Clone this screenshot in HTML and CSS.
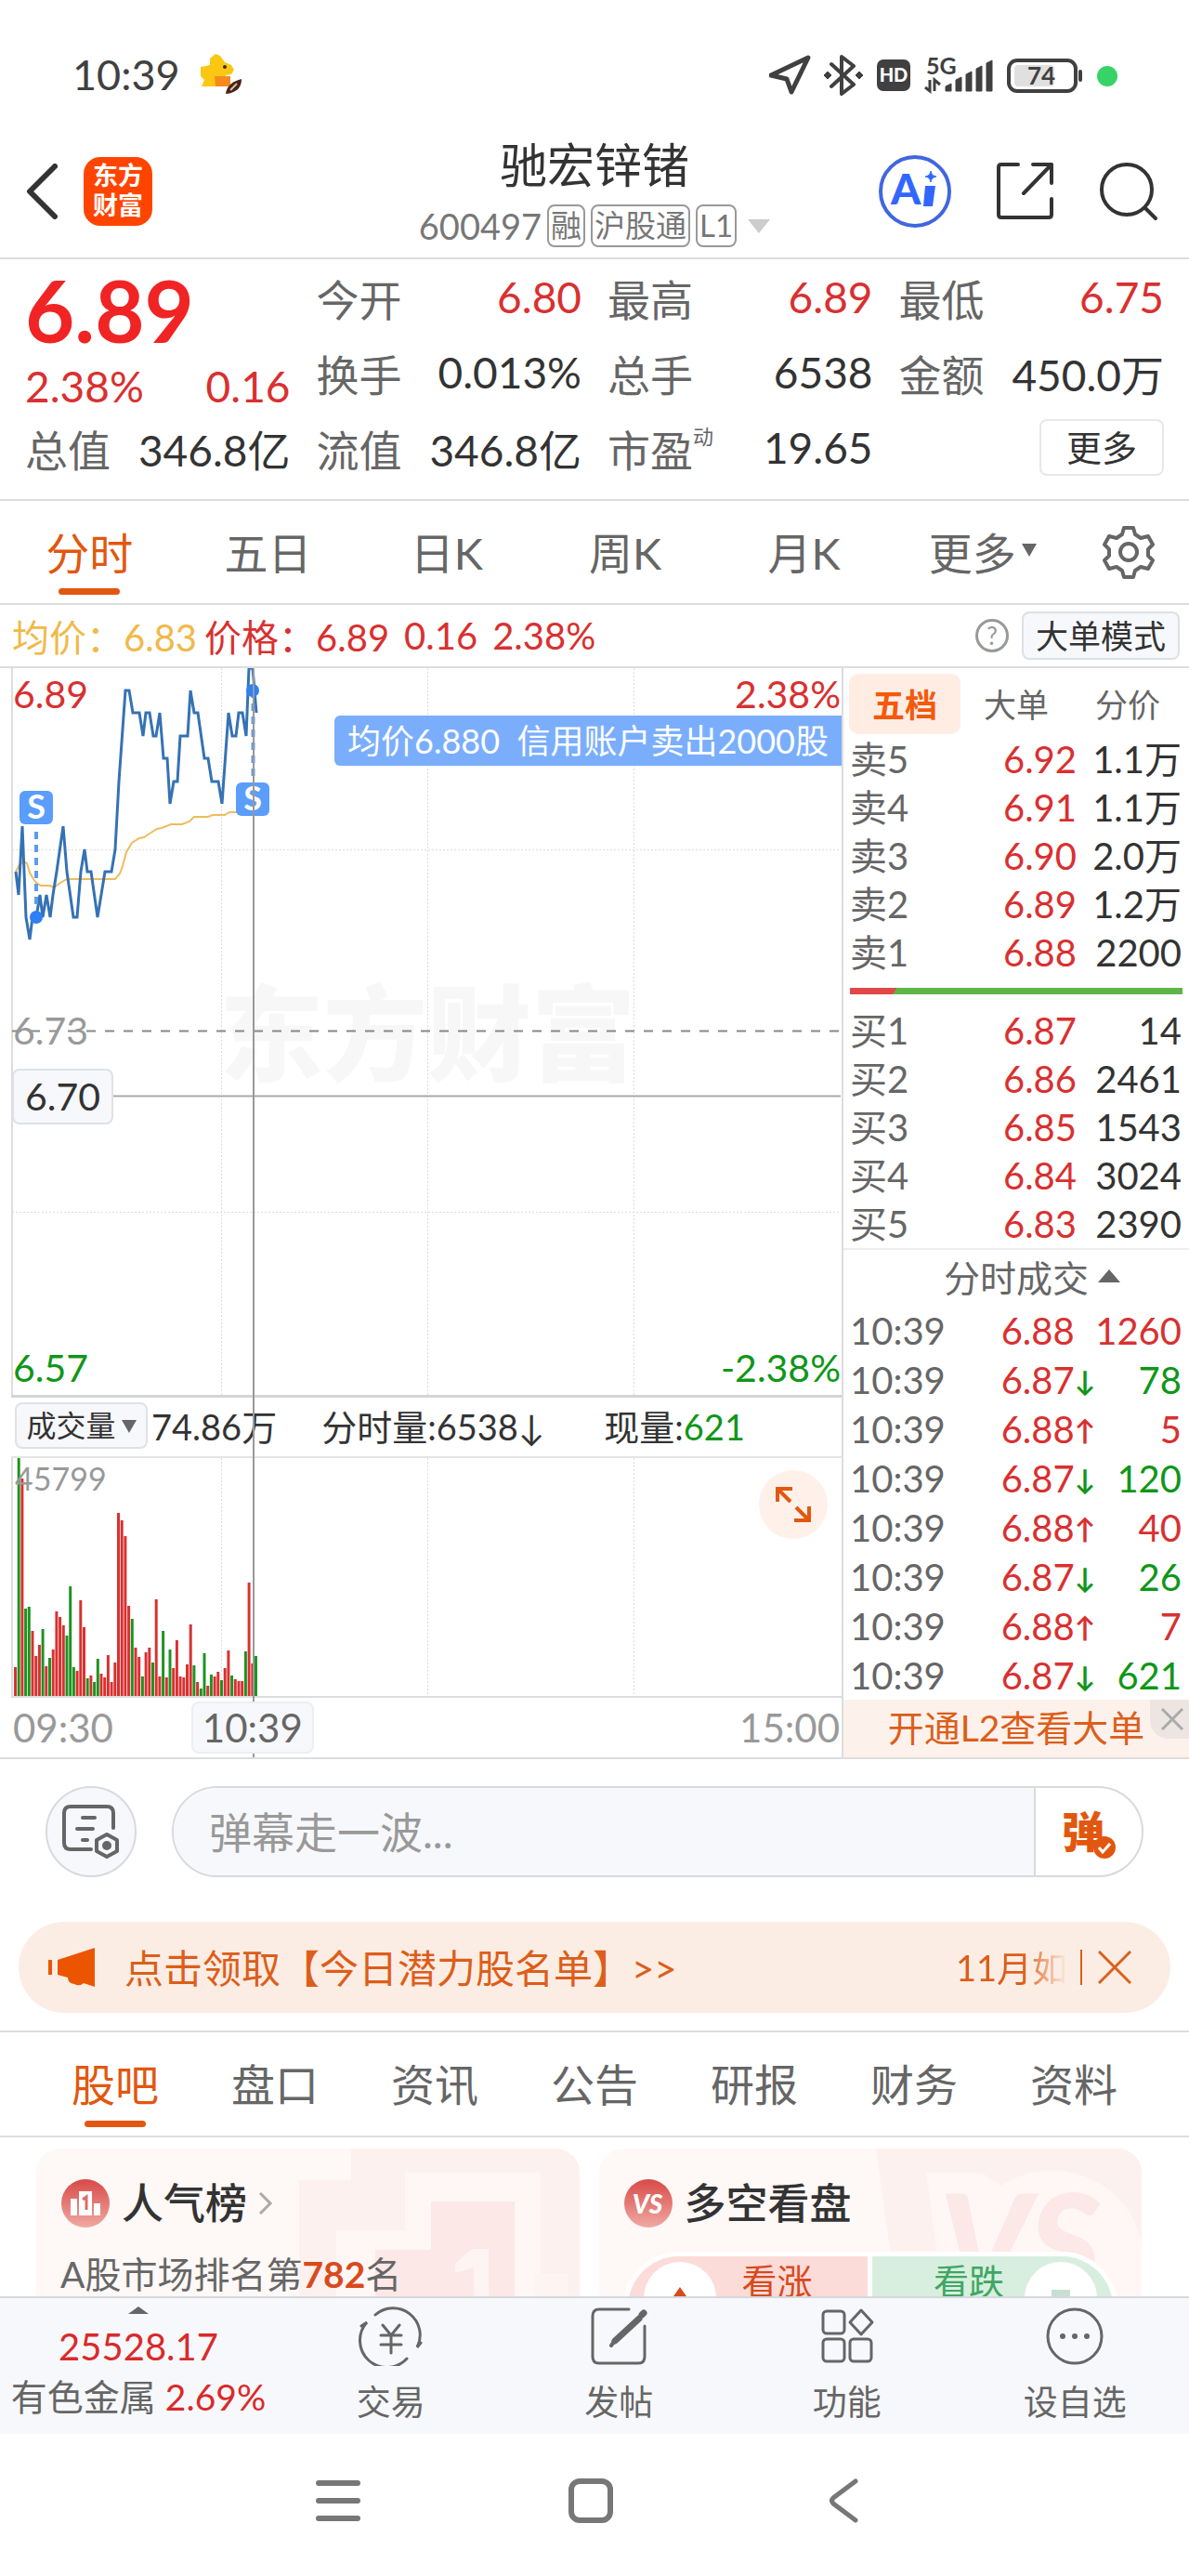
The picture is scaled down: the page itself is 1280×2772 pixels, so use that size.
FILE: index.html
```html
<!DOCTYPE html>
<html lang="zh-CN">
	<head>
		<meta charset="utf-8">
		<meta name="viewport" content="width=device-width, initial-scale=1">
		<title>驰宏锌锗 600497</title>
		<link rel="stylesheet" href="styles.css">
	</head>
	<body>
		<!-- 状态栏 -->
		<div class="status">
			<span class="clock">10:39</span>
			<svg class="dog" width="44" height="44" viewBox="0 0 44 44">
				<path d="M10 5l6-5 5 2 5 7 7 3 3 5-3 5-6 1-1 5 3 4-3 3H1l3-7-4-4V14l10-2z" fill="#fbc712"/>
				<circle cx="26" cy="14" r="2" fill="#333"/>
				<path d="M15 24h17v11H16z" fill="#f58a1f"/>
				<path d="M27 43c1-8 6-13 17-16 0 9-5 15-17 16z" fill="#4a2417"/>
				<path d="M32 39l7-7" stroke="#d8c0b4" stroke-width="2"/>
			</svg>
			<svg class="status-icons" width="376" height="46" viewBox="0 0 376 46">
				<path d="M2 24L42 5 24 42l-5-14z" fill="none" stroke="#404040" stroke-width="5" stroke-linejoin="round"/>
				<path d="M67 12l24 22-13 10V4l13 10-24 22" fill="none" stroke="#404040" stroke-width="4" stroke-linejoin="round" stroke-linecap="round"/>
				<path d="M63 20l4 4-4 4-4-4zM97 20l4 4-4 4-4-4z" fill="#404040" stroke="#404040"/>
				<rect x="116" y="7" width="36" height="34" rx="7" fill="#404040"/>
				<text x="134" y="31" class="hd">HD</text>
				<text x="169" y="23" class="net">5G</text>
				<path d="M173 29v12l-5-4M178 41V29l6 5" fill="none" stroke="#404040" stroke-width="3"/>
				<path d="M190 41v-5l6-3v8zM201 41V29l6-3v15zM212 41V23l6-3v21zM223 41V17l6-3v27zM234 41V11l6-3v33z" fill="#404040" stroke="#404040"/>
				<rect x="258" y="8" width="72" height="33" rx="9" fill="none" stroke="#404040" stroke-width="4"/>
				<rect x="264" y="13" width="43" height="23" rx="4" fill="#e0e0e0"/>
				<path d="M335 20v9" stroke="#404040" stroke-width="4" stroke-linecap="round"/>
				<text x="293" y="34" class="bat">74</text>
				<circle cx="364" cy="25" r="11" fill="#37d366"/>
			</svg>
		</div>

		<!-- 标题栏 -->
		<header class="header">
			<div class="head-left">
				<button class="plain" aria-label="返回">
					<svg width="34" height="60" viewBox="0 0 34 60"><path d="M31 3L4 30l27 27" fill="none" stroke="#333" stroke-width="6" stroke-linecap="round" stroke-linejoin="round"/></svg>
				</button>
				<a class="logo" href="#">东方<br>财富</a>
			</div>
			<div class="head-mid">
				<h1>驰宏锌锗</h1>
				<div class="code">600497<span class="tag">融</span><span class="tag">沪股通</span><span class="tag">L1</span><i class="tri tri-light"></i></div>
			</div>
			<div class="head-right">
				<button class="plain" aria-label="AI">
					<svg width="80" height="80" viewBox="0 0 80 80">
						<circle cx="40" cy="40" r="37" fill="none" stroke="#4066e0" stroke-width="4"/>
						<text x="14" y="54" class="ai">A</text>
						<path d="M51 34h11l-3 22H49z" fill="#3366ff"/>
						<path d="M57 18c1 4 2 5 6 6-4 1-5 2-6 6-1-4-2-5-6-6 4-1 5-2 6-6z" fill="#3366ff" stroke="#3366ff"/>
					</svg>
				</button>
				<button class="plain" aria-label="分享">
					<svg width="62" height="62" viewBox="0 0 62 62" fill="none" stroke="#333" stroke-width="4" stroke-linecap="round" stroke-linejoin="round"><path d="M23 2H5q-3 0-3 3v51q0 3 3 3h51q3 0 3-3V39M39 2h20v20M59 2L29 33"/></svg>
				</button>
				<button class="plain" aria-label="搜索">
					<svg width="64" height="64" viewBox="0 0 64 64" fill="none" stroke="#333" stroke-width="4" stroke-linecap="round"><circle cx="30" cy="30" r="27"/><path d="M50 50l11 11"/></svg>
				</button>
			</div>
		</header>

		<!-- 行情 -->
		<section class="quote">
			<div class="now">
				<strong>6.89</strong>
				<div class="pair red"><span>2.38%</span><span>0.16</span></div>
			</div>
			<div class="pair"><span class="name">今开</span><b class="red">6.80</b></div>
			<div class="pair"><span class="name">最高</span><b class="red">6.89</b></div>
			<div class="pair"><span class="name">最低</span><b class="red">6.75</b></div>
			<div class="pair"><span class="name">换手</span><b>0.013%</b></div>
			<div class="pair"><span class="name">总手</span><b>6538</b></div>
			<div class="pair"><span class="name">金额</span><b>450.0万</b></div>
			<div class="pair"><span class="name">总值</span><b>346.8亿</b></div>
			<div class="pair"><span class="name">流值</span><b>346.8亿</b></div>
			<div class="pair"><span class="name">市盈<sup>动</sup></span><b>19.65</b></div>
			<div class="pair more"><button class="more-btn">更多</button></div>
		</section>

		<!-- K线切换 -->
		<nav class="tabs">
			<a class="on" href="#">分时</a>
			<a href="#">五日</a>
			<a href="#">日K</a>
			<a href="#">周K</a>
			<a href="#">月K</a>
			<a href="#">更多<i class="tri tri-s"></i></a>
			<button class="plain gear" aria-label="设置">
				<svg width="58" height="58" viewBox="0 0 58 58" fill="none" stroke="#666" stroke-width="4" stroke-linejoin="round"><path d="M24 3h10l2 7 6 4 8-2 5 9-5 5v7l5 5-5 9-8-2-6 4-2 7H24l-2-7-6-4-8 2-5-9 5-5v-7l-5-5 5-9 8 2 6-4z"/><circle cx="29" cy="29" r="9"/></svg>
			</button>
		</nav>

		<div class="info">
			<span class="gold">均价：6.83</span>
			<span class="red">价格：6.89</span>
			<span class="red">0.16</span>
			<span class="red">2.38%</span>
			<button class="help" aria-label="帮助">?</button>
			<button class="mode">大单模式</button>
		</div>

		<section class="board">
			<div class="chart">
				<!-- 分时图 -->
				<svg class="price" viewBox="0 2 906 782">
					<text x="236" y="438" class="mark">东方财富</text>
					<g class="grid">
						<path d="M238.5 2v782M460.500 2v782M682.500 2v782M13 197.500h892M13 587.500h892"/>
					</g>
					<path d="M13 0v784" stroke="#ddd" stroke-width="2"/>
					<path d="M13 392.500h892" stroke="#888" stroke-width="2" stroke-dasharray="10 10"/>
					<path d="M13 462.500h892" stroke="#aaa" stroke-width="2"/>
					<path class="avg" d="M17 221l3-6 5-5 4 2 3 10 4 7 4 5 4 2h10l4 2 7-5 7-4h52l5-6 3-8 4-15 6-10 8-5 5-1 6-4 8-5 5-1 10-4h12l8-3 5-5h15l5-2h13l5-3h17l3-4h5l4-5"/>
					<path class="line" d="M17 221L20 246 24 172 28 270 32 294 35 270H39L43 246 46 270 50 246 54 270 57 246 61 221 68 172 72 221 79 270H83L87 221 91 197 94 221H98L105 270 113 221H120L124 197 128 124 135 26H139L143 50H150L154 75 157 50H161L165 75H168L172 50 176 99H180L183 148 187 124H191L194 75H202L205 26 209 50H213L220 99H224L228 124H235L239 148 246 50 250 75H254L257 50H261L265 75 268 2H272L276 50"/>
					<g class="sell">
						<path d="M39 178v78M272.500 26v98"/>
						<circle cx="39" cy="270" r="7"/>
						<circle cx="272" cy="26" r="7"/>
						<rect x="21" y="134" width="36" height="36" rx="6"/>
						<rect x="254" y="125" width="36" height="36" rx="6"/>
						<text x="39" y="164">S</text>
						<text x="272" y="155">S</text>
					</g>
					<text x="14" y="45" class="red">6.89</text>
					<text x="905" y="45" class="red end">2.38%</text>
					<text x="14" y="407" class="grey">6.73</text>
					<text x="14" y="770" class="green">6.57</text>
					<text x="905" y="770" class="green end">-2.38%</text>
				</svg>
				<div class="tip">均价6.880&nbsp; 信用账户卖出2000股</div>
				<div class="cur">6.70</div>
				<div class="vol-row">
					<button class="vol-btn">成交量<i class="tri tri-s"></i></button>
					<span>74.86万</span>
					<span class="v2">分时量:6538↓</span>
					<span class="v3">现量:<em class="green">621</em></span>
				</div>
				<!-- 成交量柱 x每格一分钟 -->
				<svg class="vol" viewBox="0 0 906 258">
					<g class="grid"><path d="M238.500 0v258M460.500 0v258M682.500 0v258"/></g>
					<g transform="translate(16.500 0) scale(3.7 1)" fill="none" stroke-width=".8">
						<path stroke="#d93030" d="M0 257V225M2 257V22M5 257V186M6 257V213M7 257V201M9 257V224M11 257V206M12 257V165M13 257V171M14 257V180M18 257V229M19 257V153M20 257V182M22 257V234M25 257V232M26 257V236M27 257V212M28 257V241M29 257V220M30 257V59M31 257V67M32 257V84M33 257V159M35 257V204M36 257V214M38 257V209M39 257V204M41 257V152M42 257V235M44 257V236M46 257V226M47 257V196M48 257V235M49 257V236M50 257V222M51 257V179M53 257V241M56 257V245M58 257V235M59 257V230M61 257V226M62 257V207M64 257V238M65 257V240M66 257V240M68 257V134M69 257V221"/>
						<path stroke="#1c9320" d="M1 257V0M3 257V162M4 257V160M8 257V184M10 257V215M15 257V191M16 257V138M17 257V225M21 257V237M23 257V241M24 257V216M34 257V173M37 257V235M40 257V220M43 257V186M45 257V206M52 257V223M54 257V248M55 257V210M57 257V233M60 257V239M63 257V234M67 257V208M70 257V213"/>
					</g>
					<path d="M13 0v257h893" fill="none" stroke="#ddd" stroke-width="2"/>
					<text x="16" y="35" class="grey small">45799</text>
				</svg>
				<button class="expand" aria-label="放大">
					<svg width="40" height="40" viewBox="0 0 40 40" fill="none" stroke="#e2570f" stroke-width="4"><path d="M3 17V3h16M4 4l13 13M37 22v15H21M36 36L23 23"/></svg>
				</button>
				<div class="axis"><span>09:30</span><span>15:00</span></div>
				<i class="cross"></i>
				<div class="cur-time">10:39</div>
			</div>

			<aside class="side">
				<div class="side-tabs">
					<button class="on">五档</button><button>大单</button><button>分价</button>
				</div>
				<table class="five">
					<tr><th>卖5</th><td class="red">6.92</td><td>1.1万</td></tr>
					<tr><th>卖4</th><td class="red">6.91</td><td>1.1万</td></tr>
					<tr><th>卖3</th><td class="red">6.90</td><td>2.0万</td></tr>
					<tr><th>卖2</th><td class="red">6.89</td><td>1.2万</td></tr>
					<tr><th>卖1</th><td class="red">6.88</td><td>2200</td></tr>
				</table>
				<div class="ratio"><i></i></div>
				<table class="five">
					<tr><th>买1</th><td class="red">6.87</td><td>14</td></tr>
					<tr><th>买2</th><td class="red">6.86</td><td>2461</td></tr>
					<tr><th>买3</th><td class="red">6.85</td><td>1543</td></tr>
					<tr><th>买4</th><td class="red">6.84</td><td>3024</td></tr>
					<tr><th>买5</th><td class="red">6.83</td><td>2390</td></tr>
				</table>
				<div class="deal-head">分时成交<i class="tri tri-up"></i></div>
				<table class="deal">
					<tr><th>10:39</th><td class="red">6.88</td><td></td><td class="red">1260</td></tr>
					<tr><th>10:39</th><td class="red">6.87</td><td class="arrow green">↓</td><td class="green">78</td></tr>
					<tr><th>10:39</th><td class="red">6.88</td><td class="arrow red">↑</td><td class="red">5</td></tr>
					<tr><th>10:39</th><td class="red">6.87</td><td class="arrow green">↓</td><td class="green">120</td></tr>
					<tr><th>10:39</th><td class="red">6.88</td><td class="arrow red">↑</td><td class="red">40</td></tr>
					<tr><th>10:39</th><td class="red">6.87</td><td class="arrow green">↓</td><td class="green">26</td></tr>
					<tr><th>10:39</th><td class="red">6.88</td><td class="arrow red">↑</td><td class="red">7</td></tr>
					<tr><th>10:39</th><td class="red">6.87</td><td class="arrow green">↓</td><td class="green">621</td></tr>
				</table>
				<div class="l2">
					<a href="#">开通L2查看大单</a>
					<button class="l2-close" aria-label="关闭"><svg width="24" height="24" viewBox="0 0 24 24"><path d="M1 1l22 22M23 1L1 23" stroke="#aaa" stroke-width="3"/></svg></button>
				</div>
			</aside>
		</section>

		<!-- 弹幕 -->
		<div class="danmu">
			<button class="round" aria-label="弹幕设置">
				<svg width="62" height="58" viewBox="0 0 62 58" fill="none" stroke="#666" stroke-width="4" stroke-linecap="round" stroke-linejoin="round"><path d="M31 48H9q-7 0-7-7V9q0-7 7-7h39q7 0 7 7v16M22 14h13M16 26h17M22 38h5"/><path d="M48 32l11 6v12l-11 6-11-6V38z"/><circle cx="48" cy="44" r="3" fill="#666"/></svg>
			</button>
			<div class="send">
				<input type="text" placeholder="弹幕走一波..." aria-label="弹幕走一波">
				<button class="dan" aria-label="弹幕开关">弹<svg class="dan-ok" width="24" height="24" viewBox="0 0 24 24"><circle cx="12" cy="12" r="12" fill="#e2570f"/><path d="M6 12l4 5 8-9" fill="none" stroke="#fff" stroke-width="3"/></svg></button>
			</div>
		</div>

		<div class="banner">
			<svg class="horn" width="52" height="42" viewBox="0 0 52 42"><path d="M2 13v16" stroke="#ec5500" stroke-width="4"/><path d="M10 13L50 0v42l-12-4q-4 4-10 1-7-1-7-7l-11-3z" fill="#ec5500"/></svg>
			<a class="ad" href="#">点击领取【今日潜力股名单】&gt;&gt;</a>
			<a class="ad2" href="#">11月如</a>
			<i class="sep"></i>
			<button class="plain" aria-label="关闭"><svg width="36" height="36" viewBox="0 0 36 36"><path d="M1 1l34 34M35 1L1 35" stroke="#dc601c" stroke-width="3"/></svg></button>
		</div>

		<nav class="tabs tabs2">
			<a class="on" href="#">股吧</a>
			<a href="#">盘口</a>
			<a href="#">资讯</a>
			<a href="#">公告</a>
			<a href="#">研报</a>
			<a href="#">财务</a>
			<a href="#">资料</a>
		</nav>

		<div class="cards">
			<div class="card">
				<svg class="deco" width="310" height="160" viewBox="0 0 310 160"><path d="M64 0h246v160H8V34h56z" fill="#fdf1ef"/><path d="M122 26h146v134H48V88h74z" fill="#fef7f5"/><path d="M150 57h90v103H90V109h60z" fill="#fce8e6"/><path d="M176 124l18-16h18v52h-16v-32l-20 6zM262 134h36v26h-36z" fill="#fef4f2"/></svg>
				<h2>
					<svg width="54" height="54" viewBox="0 0 54 54"><defs><linearGradient id="g" x2="0" y2="1"><stop stop-color="#d84a47"/><stop offset="1" stop-color="#f0a9a4"/></linearGradient></defs><circle cx="27" cy="27" r="26" fill="url(#g)"/><path d="M11 22h7v18h-7zM20 14h14v26H20zM36 27h7v13h-7z" fill="#fff"/><path d="M24 23l4-3v14" fill="none" stroke="#e06a66" stroke-width="3"/></svg>
					人气榜
					<svg width="16" height="26" viewBox="0 0 16 26"><path d="M2 2l11 11L2 24" fill="none" stroke="#aaa" stroke-width="3"/></svg>
				</h2>
				<p>A股市场排名第<em>782</em>名</p>
			</div>
			<div class="card">
				<svg class="deco" width="310" height="160" viewBox="0 0 310 160"><path d="M24 0h286v160H46z" fill="#fdf1ef"/><path d="M78 26h60l20 14q50-30 100-6 40 20 52 66v60H96z" fill="#fef7f5"/><text x="92" y="158" class="vs-bg">VS</text></svg>
				<h2>
					<svg width="54" height="54" viewBox="0 0 54 54"><circle cx="27" cy="27" r="26" fill="url(#g)"/><text x="26" y="38" class="vs">VS</text></svg>
					多空看盘
				</h2>
				<div class="vote">
					<button class="up"><svg width="78" height="78" viewBox="0 0 78 78"><circle cx="39" cy="39" r="39" fill="#fff"/><path d="M39 27l14 20H25z" fill="#d84a1c"/></svg>看涨</button>
					<button class="down">看跌<svg width="78" height="78" viewBox="0 0 78 78"><circle cx="39" cy="39" r="39" fill="#fff"/><path d="M29 30h20v12h8L39 58 21 42h8z" fill="#c6e0d0"/></svg></button>
				</div>
			</div>
		</div>

		<!-- 底部 -->
		<footer class="foot">
			<a class="index" href="#">
				<i class="tri tri-up"></i>
				<span class="idx">25528.17</span>
				<span>有色金属 <em>2.69%</em></span>
			</a>
			<a href="#">
				<svg width="72" height="64" viewBox="0 0 72 64" fill="none" stroke="#666" stroke-width="3" stroke-linecap="round"><path d="M19 9A29 29 0 0 1 64 44l4-5M53 56A29 29 0 0 1 10 17l-6 4M27 20l9 11 9-11M25 31h22M25 41h22M36 31v19"/></svg>
				<span>交易</span>
			</a>
			<a href="#">
				<svg width="62" height="64" viewBox="0 0 62 64" fill="none" stroke="#666" stroke-width="3" stroke-linecap="round"><path d="M42 3H10q-7 0-7 7v44q0 7 7 7h42q7 0 7-7V21"/><path d="M53 13L27 37M58 7l-2 2" stroke-width="7"/><path d="M28 35l-5 7" stroke-width="4"/></svg>
				<span>发帖</span>
			</a>
			<a href="#">
				<svg width="60" height="64" viewBox="0 0 60 64" fill="none" stroke="#666" stroke-width="3" stroke-linejoin="round"><rect x="4" y="5" width="23" height="24" rx="4"/><rect x="4" y="35" width="23" height="24" rx="4"/><rect x="33" y="35" width="23" height="24" rx="4"/><path d="M45 4l12 13-12 13-12-13z"/></svg>
				<span>功能</span>
			</a>
			<a href="#">
				<svg width="62" height="64" viewBox="0 0 62 64" fill="none" stroke="#666" stroke-width="3"><circle cx="31" cy="32" r="29"/><g fill="#666" stroke="none"><circle cx="18" cy="32" r="3"/><circle cx="31" cy="32" r="3"/><circle cx="44" cy="32" r="3"/></g></svg>
				<span>设自选</span>
			</a>
		</footer>

		<div class="sysnav">
			<button class="plain" aria-label="菜单"><svg width="50" height="50" viewBox="0 0 50 50"><path d="M4 6h42M4 25h42M4 44h42" stroke="#777" stroke-width="6" stroke-linecap="round"/></svg></button>
			<button class="plain" aria-label="主页"><svg width="50" height="50" viewBox="0 0 50 50"><rect x="4" y="4" width="42" height="42" rx="9" fill="none" stroke="#777" stroke-width="6"/></svg></button>
			<button class="plain" aria-label="后退"><svg width="50" height="50" viewBox="0 0 50 50"><path d="M38 4L14 22q-3 3 0 6l24 18" fill="none" stroke="#777" stroke-width="5" stroke-linecap="round"/></svg></button>
		</div>
	</body>
</html>
```
FILE: styles.css
```css
*{
	margin: 0;
	padding: 0;
	box-sizing: border-box;
}

body{
	background: #fff;
	color: #333;
	font-family: "Lato", "Noto Sans CJK SC", sans-serif;
	font-size: 40px;
}

a{
	color: inherit;
	text-decoration: none;
}

button, input{
	font: inherit;
	color: inherit;
	border: 0;
	background: none;
}

i, em{
	font-style: normal;
}

svg{
	display: block;
	flex-shrink: 0;
}

table{
	width: 100%;
	border-collapse: collapse;
}

.red{ color: #d93030; fill: #d93030; }
.green{ color: #109618; fill: #109618; }
.gold{ color: #f0b94a; }
.grey{ fill: #999; }
.plain{ display: block; }

/* 小三角 */
.tri{
	display: inline-block;
	border: 8px solid transparent;
	border-top: 14px solid #666;
	border-bottom: 0;
}
.tri-light{
	border-width: 15px 12px 0;
	border-top-color: #ccc;
	margin-left: 6px;
}
.tri-s{ margin-left: 6px; }
.tri-up{
	border: 12px solid transparent;
	border-bottom: 14px solid #666;
	border-top: 0;
}

/********** 状态栏 **********/
.status{
	height: 146px;
	padding: 14px 76px 0 78px;
	display: flex;
	align-items: center;
	color: #404040;
	font-size: 45px;
}
.dog{ margin-left: 22px; }
.status-icons{ margin-left: auto; }
.status-icons text{
	fill: #404040;
	font-size: 25px;
	font-weight: 700;
}
.status-icons .hd{
	fill: #fff;
	font-weight: 900;
	font-size: 20px;
	text-anchor: middle;
}
.status-icons .bat{
	font-size: 26px;
	text-anchor: middle;
}

/********** 标题栏 **********/
.header{
	height: 133px;
	border-bottom: 2px solid #ddd;
	display: grid;
	grid-template-columns: 1fr auto 1fr;
}
.head-left, .head-right{
	display: flex;
	align-items: center;
	height: 120px;
}
.head-left{
	padding-left: 28px;
	gap: 28px;
}
.head-right{
	justify-content: flex-end;
	padding-right: 33px;
	gap: 48px;
}
.logo{
	width: 74px;
	height: 74px;
	padding-top: 4px;
	border-radius: 18px;
	background: #ff4400;
	color: #fff;
	font-size: 27px;
	font-weight: 700;
	line-height: 32px;
	text-align: center;
}
.head-mid h1{
	font-size: 51px;
	font-weight: 400;
	line-height: 64px;
	text-align: center;
}
.code{
	display: flex;
	align-items: center;
	height: 66px;
	color: #777;
	font-size: 38px;
	gap: 6px;
}
.tag{
	height: 46px;
	padding: 0 2px;
	border: 2px solid #999;
	border-radius: 8px;
	font-size: 33px;
	line-height: 40px;
}
.ai{
	fill: #3366ff;
	font-size: 46px;
	font-weight: 900;
}

/********** 行情 **********/
.quote{
	display: grid;
	grid-template-columns: repeat(4, 1fr);
	grid-auto-rows: 81px;
	column-gap: 28px;
	padding: 0 27px 15px;
	font-size: 46px;
	border-bottom: 2px solid #ddd;
}
.now{ grid-row: span 2; }
.now strong{
	display: block;
	color: #f02424;
	font-size: 92px;
	line-height: 110px;
}
.now .pair{ height: 52px; }
.pair{
	display: flex;
	align-items: center;
	justify-content: space-between;
	white-space: nowrap;
}
.name{ color: #666; }
.pair b{ font-weight: 400; }
.pair sup{
	font-size: 22px;
	line-height: 22px;
	vertical-align: 24px;
}
.pair.more{ justify-content: flex-end; }
.more-btn{
	width: 134px;
	height: 61px;
	border: 2px solid #e8e8ea;
	border-radius: 8px;
	font-size: 38px;
	line-height: 55px;
}

/********** 标签栏 **********/
.tabs{
	display: flex;
	align-items: center;
	height: 112px;
	border-bottom: 2px solid #ddd;
	color: #666;
	font-size: 47px;
}
.tabs a{
	flex: 1;
	display: flex;
	align-items: center;
	justify-content: center;
	height: 112px;
	padding-bottom: 4px;
	position: relative;
}
.tabs .on{ color: #e2570f; }
.tabs .on::after{
	content: "";
	position: absolute;
	left: 50%;
	bottom: 10px;
	width: 66px;
	height: 7px;
	margin-left: -33px;
	border-radius: 4px;
	background: #e2570f;
}
.gear{
	width: 126px;
	padding-left: 32px;
}

.info{
	display: flex;
	align-items: center;
	height: 68px;
	padding: 0 10px 0 13px;
	border-bottom: 2px solid #ddd;
	white-space: nowrap;
}
.info span{ margin-right: 16px; }
.info .gold{ margin-right: 8px; }
.help{
	width: 36px;
	height: 36px;
	margin-left: auto;
	border: 3px solid #999;
	border-radius: 50%;
	color: #999;
	font-size: 26px;
	line-height: 28px;
}
.mode{
	width: 170px;
	height: 52px;
	margin-left: 14px;
	border: 2px solid #dde0e4;
	border-radius: 8px;
	background: #f7f8fb;
	font-size: 35px;
	line-height: 44px;
}

/********** 图表 **********/
.board{
	display: flex;
	border-bottom: 2px solid #ddd;
}
.chart{
	flex: 1;
	position: relative;
}
.chart > svg{
	width: 100%;
	height: auto;
}
.chart text{ font-size: 41px; }
.chart .small{ font-size: 34px; }
.end{ text-anchor: end; }
.grid path{
	fill: none;
	stroke: #ddd;
	stroke-width: 1;
	stroke-dasharray: 2 2;
}
.chart .mark{
	font-size: 112px;
	font-weight: 900;
	fill: #f7f7f7;
}
.avg{
	fill: none;
	stroke: #eebc5c;
	stroke-width: 2;
}
.line{
	fill: none;
	stroke: #3572b4;
	stroke-width: 3;
}
.sell{ fill: #5b9dfb; }
.sell path{
	stroke: #5b9dee;
	stroke-width: 4;
	stroke-dasharray: 8 6;
}
.sell circle{ fill: #2f7ff5; }
.chart .sell text{
	fill: #fff;
	font-size: 36px;
	font-weight: 700;
	text-anchor: middle;
}
.tip{
	position: absolute;
	top: 51px;
	right: 0;
	padding: 0 14px;
	border-radius: 6px 0 0 6px;
	background: #7aaefc;
	color: #fff;
	font-size: 36px;
	line-height: 54px;
	white-space: nowrap;
}
.cur{
	position: absolute;
	top: 431px;
	left: 13px;
	width: 109px;
	border: 2px solid #dfe1e6;
	border-radius: 8px;
	background: #f7f8fb;
	font-size: 41px;
	line-height: 56px;
	text-align: center;
}
.vol-row{
	display: flex;
	align-items: center;
	height: 68px;
	padding: 0 0 4px 4px;
	margin-left: 12px;
	border-top: 3px solid #d5d5d5;
	border-bottom: 2px solid #e4e4e4;
	font-size: 38px;
	white-space: nowrap;
}
.vol-btn{
	width: 143px;
	height: 50px;
	margin-right: 4px;
	border: 2px solid #dfe1e6;
	border-radius: 8px;
	background: #f7f8fb;
	font-size: 32px;
	line-height: 44px;
}
.vol-btn .tri{ vertical-align: 4px; }
.v2{ margin-left: 48px; }
.v3{ margin-left: 64px; }
.expand{
	position: absolute;
	top: 863px;
	right: 15px;
	display: flex;
	align-items: center;
	justify-content: center;
	width: 74px;
	height: 74px;
	border-radius: 50%;
	background: #fff1ea;
}
.axis{
	display: flex;
	justify-content: space-between;
	padding: 0 2px 0 14px;
	color: #999;
	font-size: 42px;
	line-height: 64px;
}
.cross{
	position: absolute;
	top: 0;
	bottom: 0;
	left: 30%;
	width: 2px;
	background: #999;
}
.cur-time{
	position: absolute;
	bottom: 4px;
	left: 30%;
	width: 132px;
	margin-left: -66px;
	border: 2px solid #eceef2;
	border-radius: 8px;
	background: #f7f8fb;
	color: #666;
	font-size: 42px;
	line-height: 52px;
	text-align: center;
}

/********** 五档 **********/
.side{
	width: 374px;
	border-left: 2px solid #ddd;
}
.side-tabs{
	display: flex;
	padding: 6px 6px 0;
	height: 72px;
	color: #666;
	font-size: 35px;
}
.side-tabs button{
	flex: 1;
	height: 65px;
	border-radius: 10px;
	line-height: 60px;
}
.side-tabs .on{
	background: #ffede4;
	color: #f4590c;
	font-weight: 700;
}
.side tr{ height: 52px; }
.side td, .side th{
	font-weight: 400;
	line-height: 52px;
	text-align: right;
}
.side th{
	padding-left: 7px;
	color: #666;
	text-align: left;
}
.five td:last-child{
	width: 121px;
	padding-right: 8px;
}
.five th{ font-size: 40px; }
.ratio{
	height: 32px;
	padding: 12px 7px;
}
.ratio i{
	display: block;
	height: 7px;
	background: linear-gradient(125deg, #e04848 14%, #5fb548 14%);
}
.deal-head{
	display: flex;
	align-items: center;
	justify-content: center;
	gap: 10px;
	height: 62px;
	padding-left: 34px;
	padding-bottom: 4px;
	border-top: 2px solid #eee;
	color: #666;
	font-size: 39px;
}
.side .deal td, .side .deal th{
	height: 53px;
	line-height: 50px;
}
.deal .arrow{
	width: 20px;
	font-size: 30px;
	font-weight: 700;
}
.deal td:last-child{
	width: 92px;
	padding-right: 8px;
}
.l2{
	position: relative;
	height: 62px;
	background: #fdf1ec;
	color: #dc5e1a;
	font-size: 39px;
	line-height: 60px;
	text-align: center;
}
.l2-close{
	position: absolute;
	top: 0;
	right: 0;
	width: 42px;
	height: 42px;
	padding-left: 12px;
	border-bottom-left-radius: 20px;
	background: #ede5e1;
}

/********** 弹幕 **********/
.danmu{
	display: flex;
	gap: 38px;
	padding: 29px 49px 48px;
}
.round{
	display: flex;
	align-items: center;
	justify-content: center;
	width: 98px;
	height: 98px;
	border: 2px solid #d8dadd;
	border-radius: 50%;
	background: #f7f8fb;
}
.send{
	flex: 1;
	display: flex;
	height: 98px;
	border: 2px solid #d8dadd;
	border-radius: 49px;
	overflow: hidden;
}
.send input{
	flex: 1;
	padding-left: 38px;
	background: #f7f8fb;
	font-size: 46px;
}
.send input::placeholder{ color: #999; }
.dan{
	position: relative;
	width: 116px;
	padding-right: 12px;
	border-left: 2px solid #d8dadd;
	color: #e2570f;
	font-size: 46px;
	font-weight: 900;
	line-height: 88px;
}
.dan-ok{
	position: absolute;
	left: 62px;
	bottom: 18px;
}

.banner{
	display: flex;
	align-items: center;
	height: 98px;
	margin: 0 20px 19px;
	padding: 0 42px 0 32px;
	border-radius: 49px;
	background: #fcede4;
	color: #dc5e1a;
	white-space: nowrap;
}
.ad, .ad2{ padding-bottom: 4px; }
.ad{
	margin-left: 30px;
	font-size: 42px;
}
.ad2{
	margin-left: auto;
	font-size: 38px;
	-webkit-mask-image: linear-gradient(90deg, #000 60%, transparent);
	mask-image: linear-gradient(90deg, #000 60%, transparent);
}
.sep{
	width: 2px;
	height: 38px;
	margin: 0 17px 0 14px;
	background: #dc5e1a;
}
.tabs2{
	height: 115px;
	padding: 0 38px;
	border-top: 2px solid #ddd;
}

/********** 卡片 **********/
.cards{
	display: flex;
	gap: 21px;
	height: 171px;
	padding: 12px 51px 0 39px;
	overflow: hidden;
}
.card{
	flex: 1;
	position: relative;
	height: 300px;
	padding: 31px 26px;
	border-radius: 26px;
	background: #fef8f6;
	overflow: hidden;
}
.deco{
	position: absolute;
	top: 0;
	right: 0;
	width: 310px;
}
.card h2, .card p, .vote{ position: relative; }
.card h2{
	display: flex;
	align-items: center;
	gap: 12px;
	font-size: 45px;
	font-weight: 500;
	line-height: 56px;
}
.card p{
	margin-top: 20px;
	color: #666;
	font-size: 39px;
	line-height: 56px;
}
.card p em{
	color: #d84a1c;
	font-weight: 700;
}
.vs{
	fill: #fff;
	font-size: 28px;
	font-style: italic;
	font-weight: 900;
	text-anchor: middle;
}
.vs-bg{
	fill: #fce8e6;
	font-size: 150px;
	font-style: italic;
	font-weight: 900;
}
.vote{
	display: flex;
	gap: 5px;
	height: 120px;
	margin-top: 24px;
	border: 5px solid #fff;
	border-radius: 60px;
	background: #fff;
	overflow: hidden;
}
.vote button{
	flex: 1;
	display: flex;
	gap: 28px;
	padding: 6px 17px;
	font-size: 38px;
	line-height: 40px;
}
.up{
	background: #fcdcd9;
	color: #d84a1c;
}
.vote .down{
	justify-content: flex-end;
	gap: 22px;
	background: #d8efdf;
	color: #3fa763;
}

/********** 底部 **********/
.foot{
	display: flex;
	height: 148px;
	border-top: 2px solid #d5d8dc;
	background: #f7f8fb;
	color: #666;
	font-size: 37px;
}
.foot a{
	flex: 1;
	display: flex;
	flex-direction: column;
	align-items: center;
	padding-top: 9px;
	white-space: nowrap;
}
.foot a span{ line-height: 54px; }
.foot svg + span{ margin-top: 12px; }
.foot .index{
	flex: none;
	width: 298px;
	font-size: 39px;
}
.index em, .idx{ color: #d92a2a; }
.idx{ font-size: 40px; }
.index .tri{
	border-width: 0 11px 8px;
	margin-bottom: 8px;
}

.sysnav{
	display: grid;
	grid-template-columns: repeat(3, 272px);
	justify-content: center;
	justify-items: center;
	align-items: center;
	height: 144px;
	padding-right: 8px;
}
```
